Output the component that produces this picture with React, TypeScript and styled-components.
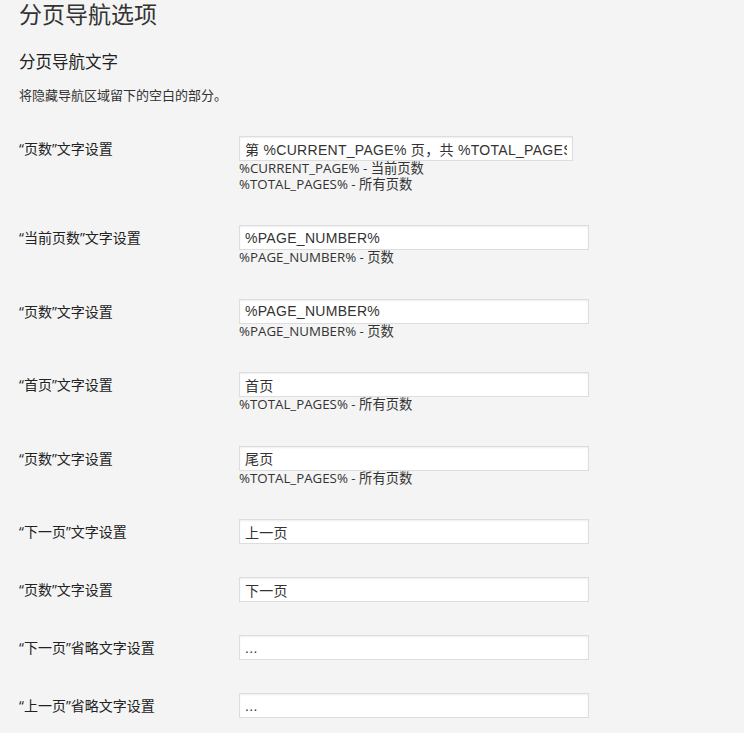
import { FC } from "react";
import styled, { createGlobalStyle } from "styled-components";

interface Option {
  id: number;
  label: string;
  value: string;
  notes: string[];
  narrow?: boolean;
}

const options: Option[] = [
  {
    id: 1,
    label: "“页数”文字设置",
    value: "第 %CURRENT_PAGE% 页，共 %TOTAL_PAGES% 页",
    notes: ["%CURRENT_PAGE% - 当前页数", "%TOTAL_PAGES% - 所有页数"],
    narrow: true,
  },
  { id: 2, label: "“当前页数”文字设置", value: "%PAGE_NUMBER%", notes: ["%PAGE_NUMBER% - 页数"] },
  { id: 3, label: "“页数”文字设置", value: "%PAGE_NUMBER%", notes: ["%PAGE_NUMBER% - 页数"] },
  { id: 4, label: "“首页”文字设置", value: "首页", notes: ["%TOTAL_PAGES% - 所有页数"] },
  { id: 5, label: "“页数”文字设置", value: "尾页", notes: ["%TOTAL_PAGES% - 所有页数"] },
  { id: 6, label: "“下一页”文字设置", value: "上一页", notes: [] },
  { id: 7, label: "“页数”文字设置", value: "下一页", notes: [] },
  { id: 8, label: "“下一页”省略文字设置", value: "...", notes: [] },
  { id: 9, label: "“上一页”省略文字设置", value: "...", notes: [] },
];

const GlobalStyle = createGlobalStyle`
  html, body {
    margin: 0;
    background: #f4f4f4;
  }
  body {
    font-family: "Open Sans", "Noto Sans CJK SC", sans-serif;
    color: #333;
  }
`;

const App: FC = () => {
  return (
    <Wrap>
      <GlobalStyle />
      <Title>分页导航选项</Title>
      <Subtitle>分页导航文字</Subtitle>
      <Intro>将隐藏导航区域留下的空白的部分。</Intro>
      <Table>
        {options.map((opt: Option) => (
          <Row key={opt.id}>
            <Label>{opt.label}</Label>
            <Field>
              <Input type="text" defaultValue={opt.value} $narrow={opt.narrow} />
              {opt.notes.map((n) => (
                <Note key={n}>{n}</Note>
              ))}
            </Field>
          </Row>
        ))}
      </Table>
    </Wrap>
  );
};

export default App;

const Wrap = styled.div`
  padding: 0 0 0 19px;
`;

const Title = styled.h1`
  margin: 0;
  padding-top: 1px;
  font-size: 23px;
  font-weight: 400;
  line-height: 26px;
  color: #333;
`;

const Subtitle = styled.h2`
  margin: 23px 0 0;
  font-size: 16.5px;
  font-weight: 400;
  line-height: 24px;
  color: #222;
`;

const Intro = styled.p`
  margin: 12px 0 0;
  font-size: 13px;
  line-height: 18px;
  color: #333;
`;

const Table = styled.div`
  margin-top: 16px;
  display: flex;
  flex-direction: column;
`;

const Row = styled.div`
  display: grid;
  grid-template-columns: 220px 1fr;
  padding: 16px 0 17px;
`;

const Label = styled.div`
  font-size: 14px;
  line-height: 25px;
  color: #222;
`;

const Field = styled.div`
  display: flex;
  flex-direction: column;
`;

const Input = styled.input<{ $narrow?: boolean }>`
  box-sizing: border-box;
  width: ${(p) => (p.$narrow ? "334px" : "350px")};
  height: 25px;
  margin: 0;
  padding: 0 5px;
  border: 1px solid #ddd;
  background: #fff;
  box-shadow: inset 0 1px 2px rgba(0, 0, 0, 0.07);
  font-family: "Liberation Sans", "Noto Sans CJK SC", sans-serif;
  font-size: 14px;
  letter-spacing: 0.3px;
  color: #333;
  outline: none;
`;

const Note = styled.span`
  font-size: 13.3px;
  line-height: 15.5px;
  color: #333;
`;
